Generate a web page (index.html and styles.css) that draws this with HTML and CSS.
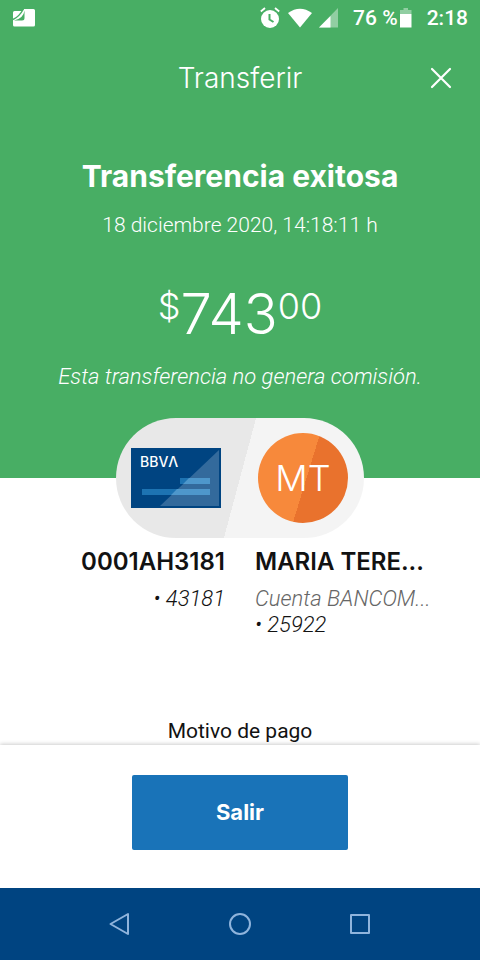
FILE: index.html
```html
<!DOCTYPE html>
<html lang="es">
<head>
<meta charset="utf-8">
<meta name="viewport" content="width=device-width, initial-scale=1">
<title>Transferir</title>
<link rel="stylesheet" href="styles.css">
</head>
<body>
<div class="screen">
  <header class="hero">
    <div class="status">
      <svg class="status-note" width="24" height="20" viewBox="0 0 24 20" aria-hidden="true">
        <path d="M12 1h9.500q1.500 0 1.500 1.500v14.500q0 1.500-1.500 1.500H2.500q-1.500 0-1.500-1.500V4.500Q1 3 2.500 3H10z" fill="#fff"/>
        <path d="M1 11.500Q7 9 11.500 1" fill="none" stroke="#48ae64" stroke-width="1.400"/>
        <path d="M2 12.500h8q2.500 0 2.500-2.500V2.500Q11.500 10.500 2 12.500z" fill="#48ae64"/>
      </svg>
      <svg width="20" height="22" viewBox="0 0 20 22" aria-hidden="true">
        <circle cx="10" cy="12" r="9" fill="#fff"/>
        <path d="M.800 4.500L5 1M19.200 4.500L15 1" stroke="#fff" stroke-width="1.800"/>
        <path d="M9.500 7v5.500l4 2.500" fill="none" stroke="#48ae64" stroke-width="2"/>
      </svg>
      <svg class="status-wifi" width="26" height="20" viewBox="0 0 26 20" aria-hidden="true"><path d="M1 5Q13-3.500 25 5L13 19.500z" fill="#fff"/></svg>
      <svg class="status-signal" width="20" height="20" viewBox="0 0 20 20" aria-hidden="true"><path d="M0 19.500L19 0v19.500z" fill="#fff" opacity=".4"/><path d="M0 19.500L11.500 8v11.500z" fill="#fff"/></svg>
      <span class="status-level">76 %</span>
      <svg width="12" height="20" viewBox="0 0 12 20" aria-hidden="true"><path d="M0 2h3.500V0h4.500v2h3.500v4H0z" fill="#fff" opacity=".4"/><path d="M0 6h11.500v13.500H0z" fill="#fff"/></svg>
      <span class="status-time">2:18</span>
    </div>
    <div class="titlebar">
      <span class="title">Transferir</span>
      <button class="close" type="button" aria-label="Cerrar">
        <svg width="22" height="22" viewBox="0 0 22 22" aria-hidden="true"><path d="M2 2l18 18M20 2L2 20" stroke="#fff" stroke-width="2.200" stroke-linecap="round"/></svg>
      </button>
    </div>
    <h1 class="result">Transferencia exitosa</h1>
    <p class="date">18 diciembre 2020, 14:18:11 h</p>
    <p class="amount"><span class="currency">$</span><span>743</span><span class="cents">00</span></p>
    <p class="fee">Esta transferencia no genera comisión.</p>
  </header>
  <main class="details">
    <div class="pill">
      <div class="card">
        <svg class="card-art" width="90" height="60" viewBox="0 0 90 60" aria-hidden="true">
          <path fill="#004481" d="M0 0h90v60H0z"/>
          <path fill="#1d73b2" d="M11 41h68v6H11z"/>
          <path fill="#1d73b2" d="M49 30h30v6H49z"/>
          <path fill="#336a9c" d="M88 2v56H29z"/>
          <path fill="#4e97cb" d="M46 41h33v6H40zM58 30h21v6H52z"/>
        </svg>
        <span class="card-brand" aria-label="BBVA">BBVΛ</span>
      </div>
      <div class="avatar">MT</div>
    </div>
    <div class="parties">
      <section class="party origin">
        <h2 class="name">0001AH3181</h2>
        <p class="account">• 43181</p>
      </section>
      <section class="party">
        <h2 class="name">MARIA TERE...</h2>
        <p class="account muted">Cuenta BANCOM...</p>
        <p class="account">• 25922</p>
      </section>
    </div>
    <p class="reason">Motivo de pago</p>
  </main>
  <footer class="actions"><button class="exit" type="button">Salir</button></footer>
  <nav class="navbar" aria-label="Sistema">
    <button type="button" aria-label="Atrás"><svg width="24" height="24" viewBox="0 0 24 24"><path d="M2.500 12L20 2v20z"/></svg></button>
    <button type="button" aria-label="Inicio"><svg width="24" height="24" viewBox="0 0 24 24"><circle cx="12" cy="12" r="10"/></svg></button>
    <button type="button" aria-label="Recientes"><svg width="24" height="24" viewBox="0 0 24 24"><path d="M3 3h18v18H3z"/></svg></button>
  </nav>
</div>
</body>
</html>
```
FILE: styles.css
```css
* { box-sizing: border-box; }
body, h1, h2, p { margin: 0; }
body {
  font-family: Roboto, sans-serif;
  font-size: 21px;
  line-height: 26px;
  color: #121212;
  background: #fff;
}
button {
  padding: 0;
  border: 0;
  background: none;
  font: inherit;
  cursor: pointer;
}
svg { display: block; }
.screen {
  display: flex;
  flex-direction: column;
  min-height: 100vh;
}
.hero {
  padding-bottom: 88px;
  background: #48ae64;
  color: #fff;
  text-align: center;
}
.status {
  display: flex;
  align-items: center;
  height: 36px;
  padding: 0 12px;
  font-weight: 500;
}
.status-note { margin-right: auto; }
.status-wifi { margin: 0 6px 0 7px; }
.status-level { margin: 0 2px 0 14px; }
.status-time { margin-left: 15px; }
.titlebar {
  display: grid;
  grid-template-columns: 1fr auto 1fr;
  align-items: center;
  height: 84px;
  padding: 0 28px;
}
.title, .result, .amount, .name, .avatar, .card-brand, .exit {
  font-family: Inter, sans-serif;
}
.title {
  grid-column: 2;
  font-size: 28px;
  font-weight: 300;
}
.close { justify-self: end; }
.result {
  padding-top: 36px;
  font-size: 30px;
  line-height: 40px;
  font-weight: 700;
}
.date {
  margin-top: 16px;
  font-weight: 350;
}
.amount {
  display: flex;
  justify-content: center;
  align-items: flex-start;
  margin-top: 48px;
  font-size: 56px;
  line-height: 56px;
  font-weight: 300;
}
.currency, .cents {
  font-size: 36px;
  line-height: 40px;
}
.fee {
  margin-top: 22px;
  font-size: 22px;
  font-style: italic;
  font-weight: 350;
}
.details {
  display: flex;
  flex-direction: column;
  flex: 1;
}
.pill {
  display: flex;
  align-items: center;
  justify-content: space-between;
  align-self: center;
  width: 248px;
  height: 120px;
  margin-top: -60px;
  padding: 0 16px 0 15px;
  border-radius: 60px;
  background: linear-gradient(105deg, #e8e8e8 50%, #f4f4f4 50%);
}
.card { position: relative; }
.card-brand {
  position: absolute;
  top: 7px;
  left: 9px;
  color: #fff;
  font-size: 14px;
  line-height: 14px;
  font-weight: 500;
}
.avatar {
  width: 90px;
  height: 90px;
  border-radius: 50%;
  background: linear-gradient(107deg, #f7893b 53%, #e9722d 53%);
  color: #fff;
  font-size: 36px;
  line-height: 90px;
  font-weight: 300;
  text-align: center;
}
.parties {
  display: grid;
  grid-template-columns: repeat(2, minmax(0, 1fr));
  gap: 30px;
  padding: 8px 40px 0;
}
.origin { text-align: right; }
.name {
  margin-bottom: 8px;
  font-size: 24px;
  line-height: 32px;
  font-weight: 600;
}
.account {
  font-size: 22px;
  font-style: italic;
  font-weight: 350;
  white-space: nowrap;
}
.muted { color: #666; }
.reason {
  margin-top: 80px;
  text-align: center;
}
.actions {
  display: flex;
  justify-content: center;
  padding: 30px 0 38px;
  background: #fff;
  box-shadow: 0 -1px 4px #0003;
}
.exit {
  width: 45%;
  height: 75px;
  padding-bottom: 2px;
  border-radius: 2px;
  background: #1973b8;
  color: #fff;
  font-size: 22px;
  font-weight: 700;
}
.navbar {
  display: flex;
  justify-content: center;
  align-items: center;
  gap: 96px;
  height: 72px;
  background: #004481;
}
.navbar svg {
  fill: none;
  stroke: #8fb4dc;
  stroke-width: 2;
  stroke-linejoin: round;
}
```
